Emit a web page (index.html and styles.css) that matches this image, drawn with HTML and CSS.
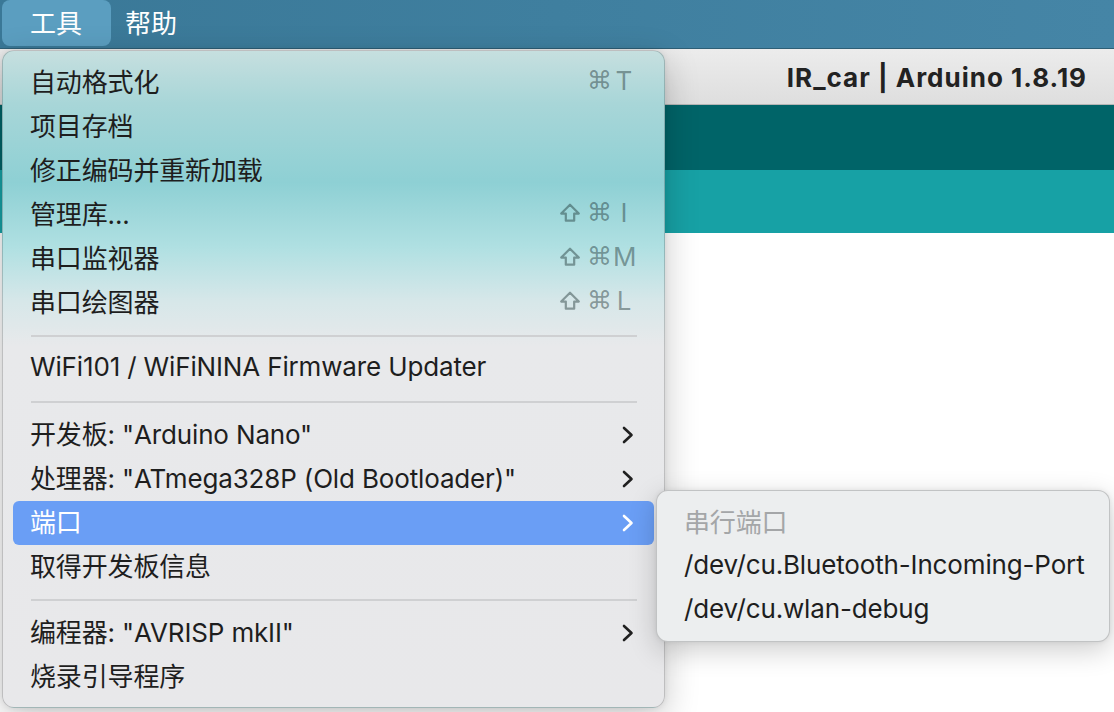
FILE: index.html
```html
<!DOCTYPE html>
<html lang="zh-CN">
<head>
<meta charset="utf-8">
<title>IR_car | Arduino 1.8.19</title>
<link rel="stylesheet" href="styles.css">
</head>
<body>
<div class="screen">
  <div class="menubar">
    <div class="mb-item active">工具</div>
    <div class="mb-item">帮助</div>
  </div>
  <div class="window">
    <div class="titlebar"><span class="title">IR_car | Arduino 1.8.19</span></div>
    <div class="toolbar"></div>
    <div class="tabs"></div>
    <div class="editor"></div>
  </div>

  <div class="menu">
    <div class="row"><span class="label">自动格式化</span><span class="sc"><span class="cmd">⌘</span><span class="key">T</span></span></div>
    <div class="row"><span class="label">项目存档</span></div>
    <div class="row"><span class="label">修正编码并重新加载</span></div>
    <div class="row"><span class="label">管理库...</span><span class="sc"><svg class="shift" viewBox="0 0 20 20"><path d="M10 2.5 L18 10.5 H13.8 V17 H6.2 V10.5 H2 Z" fill="none" stroke="currentColor" stroke-width="2" stroke-linejoin="round"/></svg><span class="cmd">⌘</span><span class="key">I</span></span></div>
    <div class="row"><span class="label">串口监视器</span><span class="sc"><svg class="shift" viewBox="0 0 20 20"><path d="M10 2.5 L18 10.5 H13.8 V17 H6.2 V10.5 H2 Z" fill="none" stroke="currentColor" stroke-width="2" stroke-linejoin="round"/></svg><span class="cmd">⌘</span><span class="key">M</span></span></div>
    <div class="row"><span class="label">串口绘图器</span><span class="sc"><svg class="shift" viewBox="0 0 20 20"><path d="M10 2.5 L18 10.5 H13.8 V17 H6.2 V10.5 H2 Z" fill="none" stroke="currentColor" stroke-width="2" stroke-linejoin="round"/></svg><span class="cmd">⌘</span><span class="key">L</span></span></div>
    <div class="sep"></div>
    <div class="row"><span class="label">WiFi101 / WiFiNINA Firmware Updater</span></div>
    <div class="sep"></div>
    <div class="row"><span class="label">开发板: "Arduino Nano"</span><svg class="chev" viewBox="0 0 14 20"><path d="M3 3 L10.5 10 L3 17" fill="none" stroke="currentColor" stroke-width="2.6" stroke-linecap="round" stroke-linejoin="round"/></svg></div>
    <div class="row"><span class="label">处理器: "ATmega328P (Old Bootloader)"</span><svg class="chev" viewBox="0 0 14 20"><path d="M3 3 L10.5 10 L3 17" fill="none" stroke="currentColor" stroke-width="2.6" stroke-linecap="round" stroke-linejoin="round"/></svg></div>
    <div class="row selected"><span class="label">端口</span><svg class="chev" viewBox="0 0 14 20"><path d="M3 3 L10.5 10 L3 17" fill="none" stroke="currentColor" stroke-width="2.6" stroke-linecap="round" stroke-linejoin="round"/></svg></div>
    <div class="row"><span class="label">取得开发板信息</span></div>
    <div class="sep"></div>
    <div class="row"><span class="label">编程器: "AVRISP mkII"</span><svg class="chev" viewBox="0 0 14 20"><path d="M3 3 L10.5 10 L3 17" fill="none" stroke="currentColor" stroke-width="2.6" stroke-linecap="round" stroke-linejoin="round"/></svg></div>
    <div class="row"><span class="label">烧录引导程序</span></div>
  </div>

  <div class="submenu">
    <div class="row header"><span class="label">串行端口</span></div>
    <div class="row"><span class="label">/dev/cu.Bluetooth-Incoming-Port</span></div>
    <div class="row"><span class="label">/dev/cu.wlan-debug</span></div>
  </div>
</div>
</body>
</html>
```
FILE: styles.css
```css
* { box-sizing: border-box; }
html, body { margin: 0; padding: 0; }
body {
  width: 1114px;
  height: 712px;
  overflow: hidden;
  font-family: "Inter", "Noto Sans CJK SC", sans-serif;
  background: #ffffff;
}
.screen {
  position: relative;
  width: 1114px;
  height: 712px;
  display: flex;
  flex-direction: column;
}
.menubar {
  height: 49px;
  flex: none;
  display: flex;
  align-items: stretch;
  padding-left: 2px;
  background: linear-gradient(90deg, #3a7897 0%, #3f7f9f 50%, #4585a6 100%);
  border-bottom: 1px solid #2e5f76;
}
.mb-item {
  display: flex;
  align-items: center;
  padding: 0 14px 3px;
  margin-bottom: 2px;
  color: #ffffff;
  font-size: 26px;
  border-radius: 8px;
}
.mb-item.active {
  width: 109px;
  padding-left: 28px;
  background: #5b9ec0;
}
.window {
  flex: 1;
  display: flex;
  flex-direction: column;
}
.titlebar {
  height: 56px;
  flex: none;
  display: flex;
  align-items: center;
  justify-content: flex-end;
  padding-right: 27px;
  padding-top: 2px;
  background: linear-gradient(180deg, #ececec 0%, #dedede 100%);
  border-bottom: 1px solid #b5b5b5;
}
.title {
  font-weight: 700;
  font-size: 26px;
  color: #222222;
  letter-spacing: 1px;
}
.toolbar {
  height: 65px;
  flex: none;
  background: #006468;
}
.tabs {
  height: 63px;
  flex: none;
  background: #17a1a5;
}
.editor {
  flex: 1;
  background: #ffffff;
}

.menu {
  position: absolute;
  left: 2px;
  top: 50px;
  width: 663px;
  height: 658px;
  padding: 10px 10px;
  border-radius: 12px;
  border: 1px solid rgba(0, 0, 0, 0.18);
  background: linear-gradient(180deg,
    #c6dfdf 0%,
    #a8d6d8 8%,
    #8ed0d4 20%,
    #b0e0e2 30%,
    #d6e7e9 38%,
    #e8e9eb 45%,
    #e8e8ea 100%);
  box-shadow: 0 10px 34px rgba(0, 0, 0, 0.22), 0 0 6px rgba(0, 0, 0, 0.08);
  display: flex;
  flex-direction: column;
}
.row {
  height: 44px;
  flex: none;
  display: flex;
  align-items: center;
  justify-content: space-between;
  padding: 0 19px 5px 17px;
  border-radius: 6px;
  font-size: 26px;
  color: #1e1e1e;
  letter-spacing: -0.15px;
}
.label { white-space: nowrap; }
.row.selected {
  background: #6a9ef5;
  color: #ffffff;
}
.sep {
  height: 22px;
  flex: none;
  display: flex;
  align-items: center;
  margin: 0 17px 0 18px;
}
.sep::before {
  content: "";
  display: block;
  width: 100%;
  height: 2px;
  background: #cfd0d2;
}
.sc {
  display: flex;
  align-items: center;
  color: rgba(20, 40, 40, 0.42);
  font-size: 26px;
  letter-spacing: 0;
}
.shift {
  width: 22px;
  height: 22px;
  margin-right: 6px;
}
.cmd {
  font-family: "DejaVu Sans", sans-serif;
  font-size: 25px;
  width: 22px;
  text-align: center;
}
.key {
  width: 22px;
  text-align: center;
  margin-left: 4px;
}
.chev {
  width: 14px;
  height: 20px;
  margin-top: 5px;
  color: #202020;
}
.row.selected .chev { color: #ffffff; }

.submenu {
  position: absolute;
  left: 656px;
  top: 490px;
  width: 454px;
  height: 152px;
  padding: 10px 10px;
  border-radius: 12px;
  border: 1px solid rgba(0, 0, 0, 0.18);
  background: #eceeef;
  box-shadow: 0 8px 28px rgba(0, 0, 0, 0.2), 0 0 5px rgba(0, 0, 0, 0.08);
  display: flex;
  flex-direction: column;
}
.submenu .row { justify-content: flex-start; }
.row.header { color: #a4a6a8; }
```
